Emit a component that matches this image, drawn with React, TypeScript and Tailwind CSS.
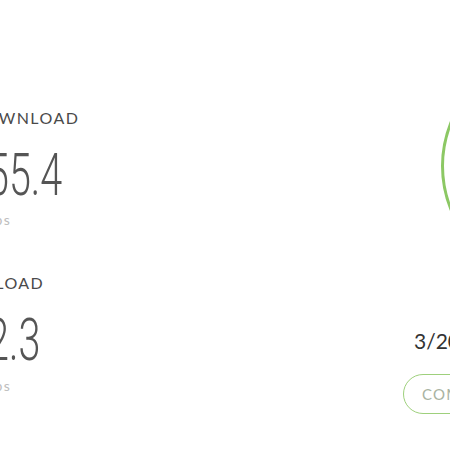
export default function App() {
    return (
        <div className="w-[450px] h-[450px] overflow-hidden bg-white font-['Lato','Open_Sans',sans-serif]">
            <div className="flex">
                {/* Results */}
                <div className="ml-[-29px] w-[360px] shrink-0 pt-[110px]">
                    <div className="text-[16px] leading-none tracking-[0.09em] text-[#4a4a4a]">DOWNLOAD</div>
                    <div className="mt-[19px] ml-[16px] h-[54px] text-[59px] leading-none font-light text-[#555] font-['Roboto',sans-serif]">
                        <span className="inline-block origin-left scale-x-[0.67]">55.4</span>
                    </div>
                    <div className="mt-[14px] text-[14px] leading-none tracking-[0.1em] text-[#bdbdbd]">Mbps</div>

                    <div className="mt-[48px] text-[16px] leading-none tracking-[0.09em] text-[#4a4a4a]">UPLOAD</div>
                    <div className="mt-[19px] ml-[16px] h-[54px] text-[59px] leading-none font-light text-[#555] font-['Roboto',sans-serif]">
                        <span className="inline-block origin-left scale-x-[0.67]">2.3</span>
                    </div>
                    <div className="mt-[15px] text-[14px] leading-none tracking-[0.1em] text-[#bdbdbd]">Mbps</div>
                </div>

                {/* Gauge + date */}
                <div className="ml-[72px] flex flex-col items-start shrink-0">
                    <div className="ml-[38px] mt-[49px] w-[234px] h-[234px] shrink-0 rounded-full border-[3px] border-[#8cc864]"></div>
                    <div className="ml-[11px] mt-[47px] text-[21px] leading-none text-[#333]">3/20/2019</div>
                    <button className="mt-[23px] h-[40px] px-[18px] rounded-full border-[1.5px] border-[#9ed07c] text-[15px] tracking-[0.08em] text-[#a9b3a2]">
                        COMPARE
                    </button>
                </div>
            </div>
        </div>
    );
}
